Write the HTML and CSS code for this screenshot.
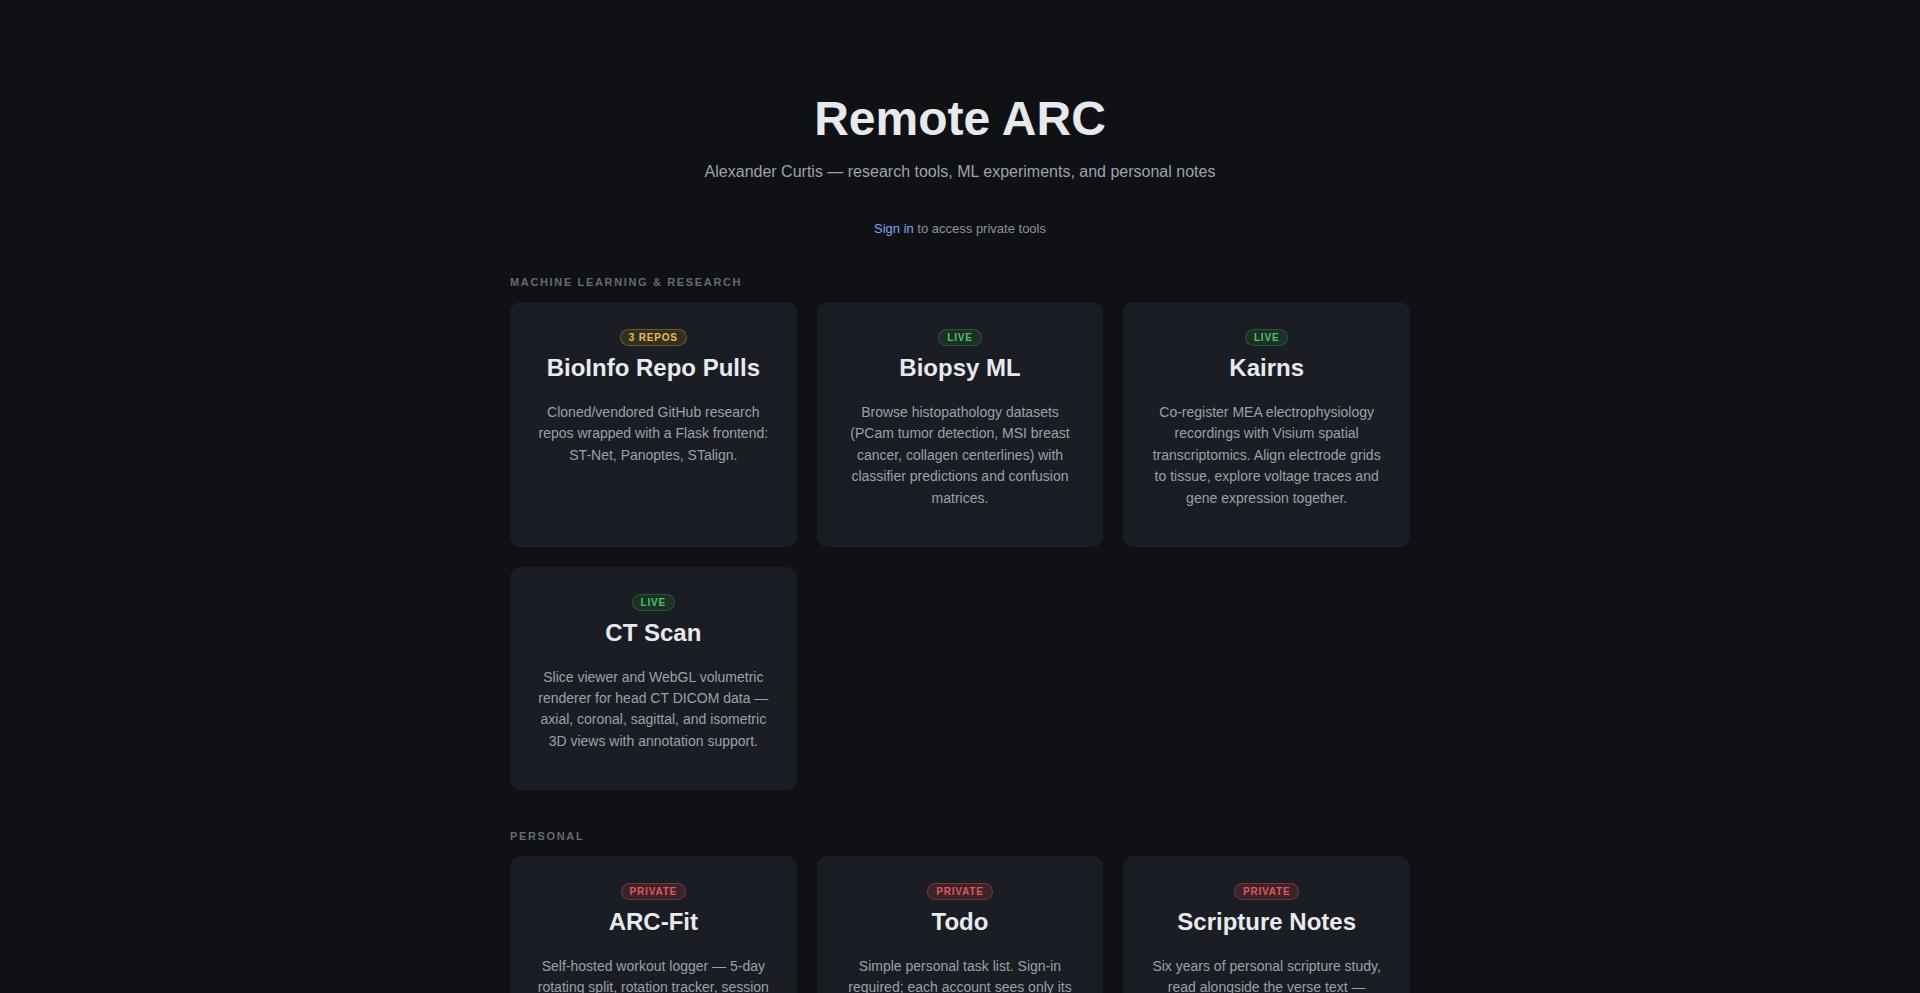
FILE: index.html
```html
<!DOCTYPE html>
<html lang="en">
<head>
<meta charset="utf-8">
<title>Remote ARC</title>
<link rel="stylesheet" href="styles.css">
</head>
<body>
<main class="page">
  <header class="hero">
    <h1 class="hero-title">Remote ARC</h1>
    <p class="hero-sub">Alexander Curtis — research tools, ML experiments, and personal notes</p>
    <p class="signin"><a href="#" class="signin-link">Sign in</a> to access private tools</p>
  </header>

  <section class="section">
    <h2 class="section-label">Machine Learning &amp; Research</h2>
    <div class="grid">
      <a href="#" class="card">
        <span class="badge badge-repos">3 Repos</span>
        <h3 class="card-title">BioInfo Repo Pulls</h3>
        <p class="card-desc">Cloned/vendored GitHub research repos wrapped with a Flask frontend: ST-Net, Panoptes, STalign.</p>
      </a>
      <a href="#" class="card">
        <span class="badge badge-live">Live</span>
        <h3 class="card-title">Biopsy ML</h3>
        <p class="card-desc">Browse histopathology datasets (PCam tumor detection, MSI breast cancer, collagen centerlines) with classifier predictions and confusion matrices.</p>
      </a>
      <a href="#" class="card">
        <span class="badge badge-live">Live</span>
        <h3 class="card-title">Kairns</h3>
        <p class="card-desc">Co-register MEA electrophysiology recordings with Visium spatial transcriptomics. Align electrode grids to tissue, explore voltage traces and gene expression together.</p>
      </a>
      <a href="#" class="card">
        <span class="badge badge-live">Live</span>
        <h3 class="card-title">CT Scan</h3>
        <p class="card-desc">Slice viewer and WebGL volumetric renderer for head CT DICOM data — axial, coronal, sagittal, and isometric 3D views with annotation support.</p>
      </a>
    </div>
  </section>

  <section class="section">
    <h2 class="section-label">Personal</h2>
    <div class="grid">
      <a href="#" class="card">
        <span class="badge badge-private">Private</span>
        <h3 class="card-title">ARC-Fit</h3>
        <p class="card-desc">Self-hosted workout logger — 5-day rotating split, rotation tracker, session history and progress charts.</p>
      </a>
      <a href="#" class="card">
        <span class="badge badge-private">Private</span>
        <h3 class="card-title">Todo</h3>
        <p class="card-desc">Simple personal task list. Sign-in required; each account sees only its own tasks.</p>
      </a>
      <a href="#" class="card">
        <span class="badge badge-private">Private</span>
        <h3 class="card-title">Scripture Notes</h3>
        <p class="card-desc">Six years of personal scripture study, read alongside the verse text — searchable by book and chapter.</p>
      </a>
    </div>
  </section>
</main>
</body>
</html>
```

FILE: styles.css
```css
* { box-sizing: border-box; }

html, body {
  margin: 0;
  padding: 0;
  background: #0f1115;
}

body {
  font-family: "Liberation Sans", Arial, sans-serif;
  color: #e6e8eb;
}

.page {
  max-width: 900px;
  margin: 0 auto;
  padding: 91px 0 80px;
}

.hero {
  text-align: center;
}

.hero-title {
  margin: 0;
  font-size: 48px;
  line-height: 56px;
  font-weight: 700;
  color: #e8e9eb;
}

.hero-sub {
  margin: 13px 0 0;
  font-size: 16px;
  line-height: 24px;
  color: #9da3ab;
}

.signin {
  margin: 35px 0 0;
  font-size: 13px;
  line-height: 20px;
  color: #8b929b;
}

.signin-link {
  color: #7fa7ee;
  text-decoration: none;
}

.section {
  margin-top: 35px;
}

.section + .section {
  margin-top: 38px;
}

.section-label {
  margin: 0 0 12px;
  font-size: 11px;
  line-height: 16px;
  font-weight: 700;
  letter-spacing: 0.15em;
  text-transform: uppercase;
  color: #656b75;
}

.grid {
  display: grid;
  grid-template-columns: repeat(3, 1fr);
  gap: 20px;
}

.card {
  display: flex;
  flex-direction: column;
  align-items: center;
  text-align: center;
  padding: 27px 24px 37.5px;
  background: #1a1d23;
  border-radius: 11px;
  text-decoration: none;
  color: inherit;
}

.badge {
  display: inline-block;
  padding: 2px 8px;
  font-size: 10px;
  line-height: 11px;
  font-weight: 700;
  letter-spacing: 0.08em;
  text-transform: uppercase;
  border: 1px solid;
  border-radius: 999px;
}

.badge-repos {
  color: #e9bc45;
  background: rgba(210, 160, 34, 0.14);
  border-color: rgba(210, 160, 34, 0.36);
}

.badge-live {
  color: #48c461;
  background: rgba(46, 160, 67, 0.15);
  border-color: rgba(46, 160, 67, 0.36);
}

.badge-private {
  color: #e5555d;
  background: rgba(229, 83, 90, 0.15);
  border-color: rgba(229, 83, 90, 0.36);
}

.card-title {
  margin: 7px 0 0;
  font-size: 24px;
  line-height: 30px;
  font-weight: 700;
  color: #e8eaed;
}

.card-desc {
  margin: 19px 0 0;
  font-size: 14px;
  line-height: 21.4px;
  color: #9ba1aa;
}
```
